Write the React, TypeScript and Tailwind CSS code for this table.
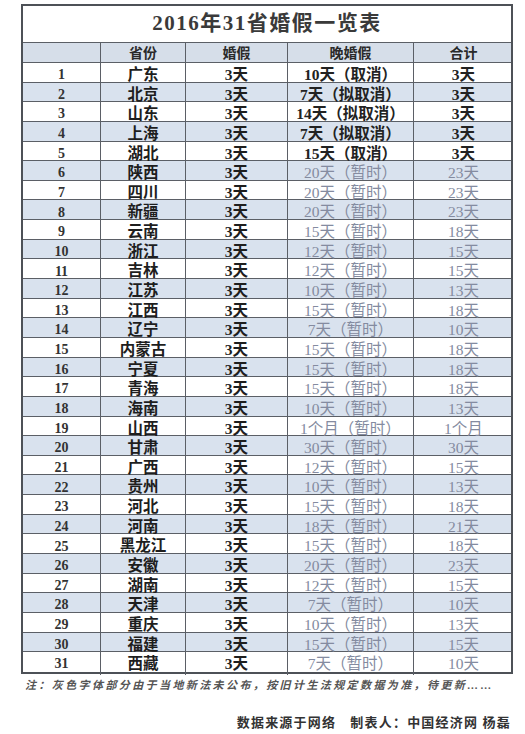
const font = {
  fontFamily: '"Liberation Serif", "Noto Sans CJK SC", serif',
};

type Row = [string, string, string, string];

const rows: Row[] = [
  ['广东', '3天', '10天（取消）', '3天'],
  ['北京', '3天', '7天（拟取消）', '3天'],
  ['山东', '3天', '14天（拟取消）', '3天'],
  ['上海', '3天', '7天（拟取消）', '3天'],
  ['湖北', '3天', '15天（取消）', '3天'],
  ['陕西', '3天', '20天（暂时）', '23天'],
  ['四川', '3天', '20天（暂时）', '23天'],
  ['新疆', '3天', '20天（暂时）', '23天'],
  ['云南', '3天', '15天（暂时）', '18天'],
  ['浙江', '3天', '12天（暂时）', '15天'],
  ['吉林', '3天', '12天（暂时）', '15天'],
  ['江苏', '3天', '10天（暂时）', '13天'],
  ['江西', '3天', '15天（暂时）', '18天'],
  ['辽宁', '3天', '7天（暂时）', '10天'],
  ['内蒙古', '3天', '15天（暂时）', '18天'],
  ['宁夏', '3天', '15天（暂时）', '18天'],
  ['青海', '3天', '15天（暂时）', '18天'],
  ['海南', '3天', '10天（暂时）', '13天'],
  ['山西', '3天', '1个月（暂时）', '1个月'],
  ['甘肃', '3天', '30天（暂时）', '30天'],
  ['广西', '3天', '12天（暂时）', '15天'],
  ['贵州', '3天', '10天（暂时）', '13天'],
  ['河北', '3天', '15天（暂时）', '18天'],
  ['河南', '3天', '18天（暂时）', '21天'],
  ['黑龙江', '3天', '15天（暂时）', '18天'],
  ['安徽', '3天', '20天（暂时）', '23天'],
  ['湖南', '3天', '12天（暂时）', '15天'],
  ['天津', '3天', '7天（暂时）', '10天'],
  ['重庆', '3天', '10天（暂时）', '13天'],
  ['福建', '3天', '15天（暂时）', '15天'],
  ['西藏', '3天', '7天（暂时）', '10天'],
];

const cols = 'grid grid-cols-[78px_85px_102px_126px_99px]';
const cell = 'flex items-center justify-center border-r border-[#5b5f66] last:border-r-0 whitespace-nowrap';

export default function App() {
  return (
    <div className="w-[525px] h-[734px] bg-white overflow-hidden" style={font}>
      <div className="pt-[4px] pl-[21px]">
        <div className="w-[492px] border-2 border-[#4d5157]">
          <div className="h-[37px] flex items-center justify-center border-b border-[#5b5f66] text-[21px] font-bold text-[#3a3a3a] tracking-[1.5px]">
            2016年31省婚假一览表
          </div>
          <div className={`${cols} h-[20px] bg-[#d6dee9] border-b border-[#5b5f66] text-[14px] font-bold text-[#2a2a2a]`}>
            <div className={cell}></div>
            <div className={cell}>省份</div>
            <div className={cell}>婚假</div>
            <div className={cell}>晚婚假</div>
            <div className={cell}>合计</div>
          </div>
          {rows.map((r, i) => {
            const gray = i >= 5;
            const tone = gray ? 'text-[#848ba0] font-normal' : 'text-[#222] font-bold';
            return (
              <div
                key={i}
                className={`${cols} h-[19.65px] border-b border-[#5b5f66] last:border-b-0 text-[15.5px] ${
                  i % 2 === 1 ? 'bg-[#d9e2ee]' : 'bg-white'
                }`}
              >
                <div className={`${cell} font-bold text-[#333] text-[14px]`}>{i + 1}</div>
                <div className={`${cell} font-bold text-[#1e1e1e]`}>{r[0]}</div>
                <div className={`${cell} font-bold text-[#1e1e1e]`}>{r[1]}</div>
                <div className={`${cell} ${tone}`}>{r[2]}</div>
                <div className={`${cell} ${tone}`}>{r[3]}</div>
              </div>
            );
          })}
        </div>
        <div className="mt-[3px] pl-[4px] text-[11px] italic font-bold text-[#555] tracking-[2.4px] whitespace-nowrap">
          注：灰色字体部分由于当地新法未公布，按旧计生法规定数据为准，待更新……
        </div>
        <div className="mt-[20px] w-[490px] text-right text-[13px] font-bold text-[#333] tracking-[1.2px] whitespace-nowrap">
          数据来源于网络　制表人：中国经济网 杨磊
        </div>
      </div>
    </div>
  );
}
